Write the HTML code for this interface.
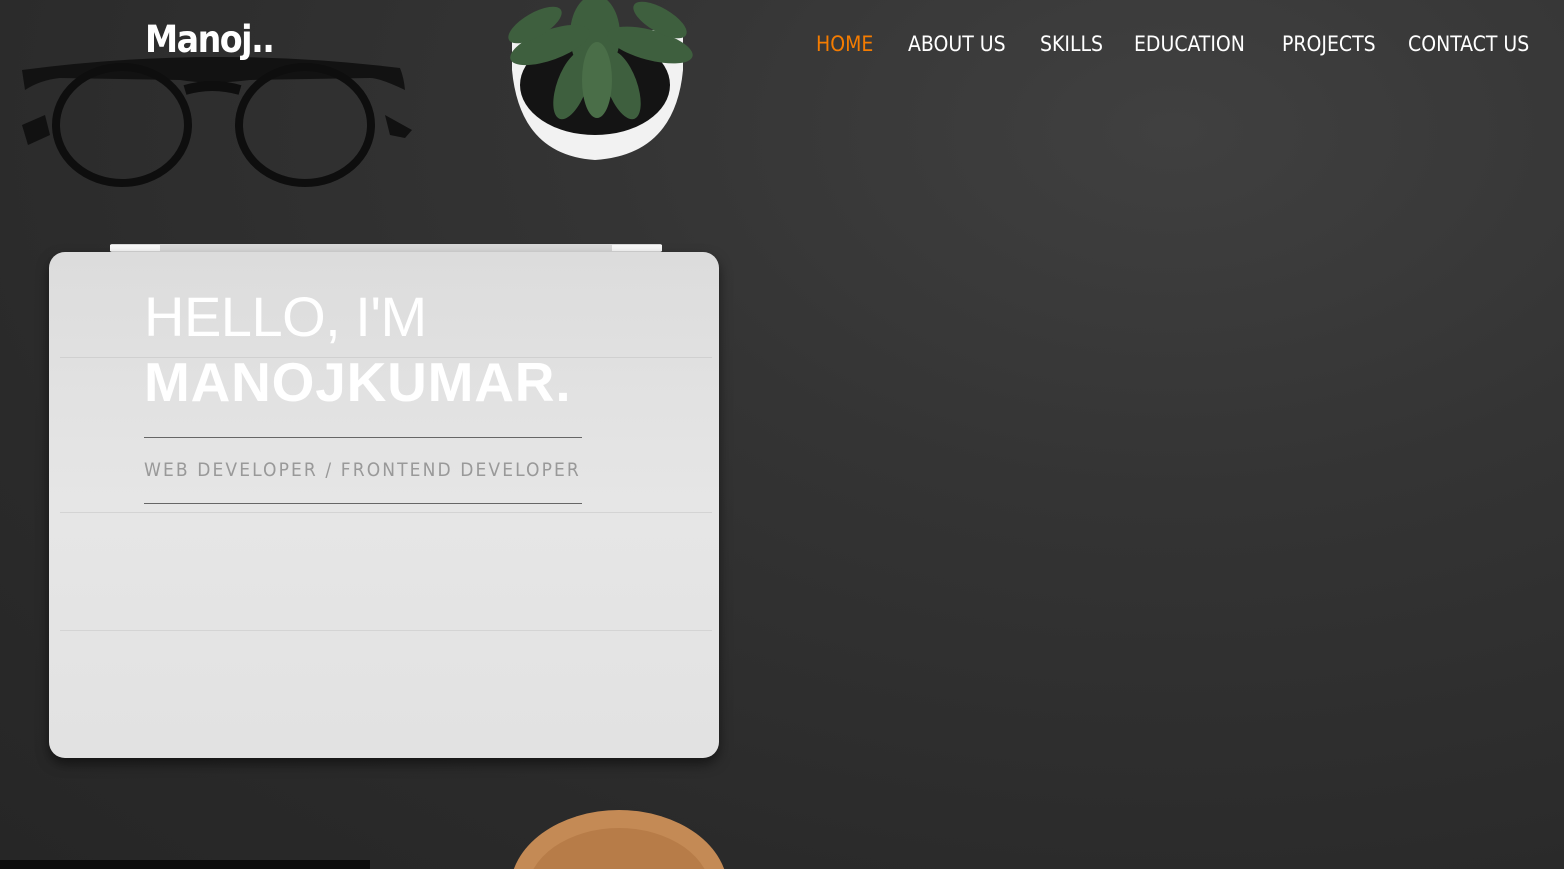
<!DOCTYPE html>
<html><head><meta charset="utf-8"><style>
html,body{margin:0;padding:0;width:1564px;height:869px;overflow:hidden;background:#2c2c2c;font-family:"Liberation Sans",sans-serif}
#w{position:relative;width:1564px;height:869px;overflow:hidden}
.bg{position:absolute;inset:0;background:radial-gradient(ellipse at 75% 15%,#404040 0%,#343434 35%,#2a2a2a 75%,#262626 100%)}
.abs{position:absolute}
nav a{position:absolute;top:32px;font-size:21px;color:#fff;text-decoration:none;font-family:"DejaVu Sans Condensed","Liberation Sans",sans-serif;letter-spacing:0px}
</style></head><body><div id="w">
<div class="bg"></div>
<svg class="abs" style="left:0;top:40px" width="430" height="160">
<path d="M22 30 Q210 5 400 28 Q404 38 405 50 Q380 38 370 38 L250 40 Q210 45 180 40 L60 38 Q40 40 25 50Z" fill="#121212"/>
<ellipse cx="122" cy="85" rx="66" ry="58" fill="none" stroke="#0e0e0e" stroke-width="8"/>
<ellipse cx="305" cy="85" rx="66" ry="58" fill="none" stroke="#0e0e0e" stroke-width="8"/>
<path d="M185 50 Q212 42 240 50" stroke="#0e0e0e" stroke-width="10" fill="none"/>
<path d="M22 85 L45 75 L50 95 L28 105Z M385 75 L412 90 L405 98 L390 95Z" fill="#111"/>
</svg>
<svg class="abs" style="left:500px;top:0" width="210" height="170">
<path d="M12 30 L12 70 Q20 155 95 160 Q175 155 183 70 L183 30Z" fill="#f2f2f2"/>
<ellipse cx="95" cy="85" rx="75" ry="50" fill="#141414"/>
<g fill="#3e5f3e">
<ellipse cx="95" cy="35" rx="25" ry="40"/><ellipse cx="50" cy="45" rx="42" ry="15" transform="rotate(-20 50 45)"/>
<ellipse cx="150" cy="45" rx="44" ry="15" transform="rotate(15 150 45)"/>
<ellipse cx="72" cy="85" rx="15" ry="36" transform="rotate(20 72 85)"/>
<ellipse cx="122" cy="85" rx="15" ry="36" transform="rotate(-20 122 85)"/>
<ellipse cx="97" cy="80" rx="15" ry="38" fill="#4a6e48"/>
<ellipse cx="35" cy="25" rx="30" ry="12" transform="rotate(-30 35 25)"/>
<ellipse cx="160" cy="20" rx="30" ry="12" transform="rotate(30 160 20)"/>
</g></svg>
<div class="abs" style="left:110px;top:244px;width:552px;height:8px;background:#d8d8d8;border-radius:2px"></div>
<div class="abs" style="left:110px;top:245px;width:50px;height:6px;background:#f8f8f8"></div>
<div class="abs" style="left:612px;top:245px;width:50px;height:6px;background:#f8f8f8"></div>
<div class="abs" style="left:49px;top:252px;width:670px;height:506px;background:linear-gradient(#dcdcdc,#e6e6e6 50%,#e2e2e2);border-radius:16px;box-shadow:0 6px 12px rgba(0,0,0,.5)"></div>
<div class="abs" style="left:60px;top:357px;width:652px;height:1px;background:#d0d0d0"></div>
<div class="abs" style="left:60px;top:512px;width:652px;height:1px;background:#d4d4d4"></div>
<div class="abs" style="left:60px;top:630px;width:652px;height:1px;background:#d4d4d4"></div>
<div class="abs" style="left:510px;top:810px;width:218px;height:59px;overflow:hidden">
<div class="abs" style="left:0;top:0;width:218px;height:160px;border-radius:50%;background:#c48a55"></div>
<div class="abs" style="left:17px;top:18px;width:184px;height:130px;border-radius:50%;background:#b77c48"></div>
</div>
<div class="abs" style="left:0;top:860px;width:370px;height:9px;background:#0c0c0c"></div>
<div class="abs" style="left:145px;top:18px;font-family:'Comic Sans MS','DejaVu Sans Condensed',sans-serif;font-weight:bold;font-size:37px;color:#fff;letter-spacing:-1.5px">Manoj..</div>
<nav>
<a style="left:816px;color:#f57c00">HOME</a>
<a style="left:908px">ABOUT US</a>
<a style="left:1040px">SKILLS</a>
<a style="left:1134px">EDUCATION</a>
<a style="left:1282px">PROJECTS</a>
<a style="left:1408px">CONTACT US</a>
</nav>
<div class="abs" style="left:144px;top:285px;font-size:56px;color:#fff;line-height:64px;letter-spacing:-0.5px">HELLO, I'M</div>
<div class="abs" style="left:144px;top:350px;font-size:55px;font-weight:bold;color:#fff;line-height:64px;letter-spacing:0.8px">MANOJKUMAR.</div>
<div class="abs" style="left:144px;top:437px;width:438px;height:1px;background:#666"></div>
<div class="abs" style="left:144px;top:459px;font-size:19px;color:#999;letter-spacing:2.1px;font-family:'DejaVu Sans Condensed',sans-serif">WEB DEVELOPER / FRONTEND DEVELOPER</div>
<div class="abs" style="left:144px;top:503px;width:438px;height:1px;background:#666"></div>
</div></body></html>
